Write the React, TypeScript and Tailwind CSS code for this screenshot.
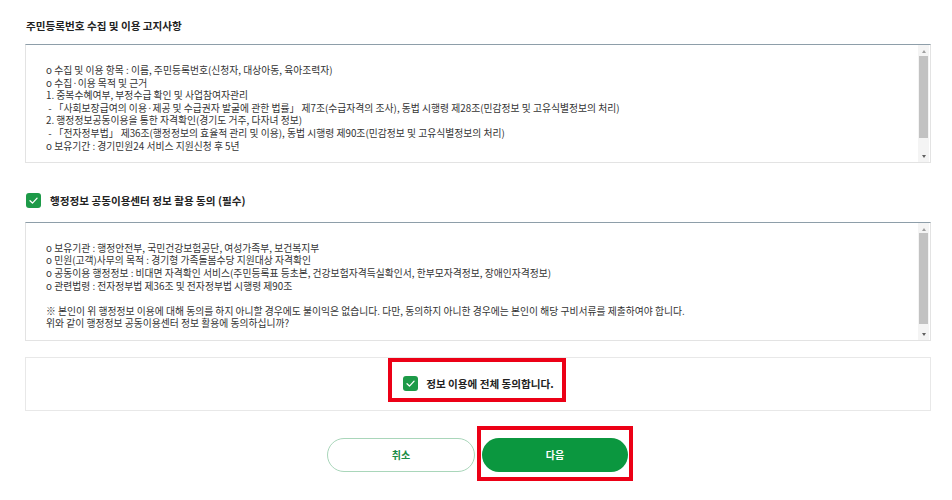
import React from "react";

const FONT = { fontFamily: '"Noto Sans CJK KR", "Noto Sans", sans-serif' };

function Check({ size = 15 }: { size?: number }) {
  return (
    <div
      className="flex items-center justify-center rounded-[3px] bg-[#1d9a48] shrink-0"
      style={{ width: size, height: size }}
    >
      <svg width={size - 4} height={size - 4} viewBox="0 0 12 12" fill="none">
        <path d="M2.2 6.2 L4.9 8.8 L9.9 3.4" stroke="#ffffff" strokeWidth="1.4" strokeLinecap="round" strokeLinejoin="round" />
      </svg>
    </div>
  );
}

function FakeScroll({ thumbTop, thumbH }: { thumbTop: number; thumbH: number }) {
  return (
    <div className="relative w-[11px] mr-[1px] bg-[#f4f4f4] shrink-0">
      <div className="flex justify-center pt-[5px]">
        <div className="w-0 h-0 border-l-[2.5px] border-r-[2.5px] border-b-[3px] border-l-transparent border-r-transparent border-b-[#a0a0a0]" />
      </div>
      <div className="absolute left-[1px] right-[1px] bg-[#c2c2c2]" style={{ top: thumbTop, height: thumbH }} />
      <div className="absolute bottom-[4px] left-0 right-0 flex justify-center">
        <div className="w-0 h-0 border-l-[2.5px] border-r-[2.5px] border-t-[3px] border-l-transparent border-r-transparent border-t-[#606060]" />
      </div>
    </div>
  );
}

const box1 = [
  "o 수집 및 이용 항목 : 이름, 주민등록번호(신청자, 대상아동, 육아조력자)",
  "o 수집·이용 목적 및 근거",
  "1. 중복수혜여부, 부정수급 확인 및 사업참여자관리",
  " - 「사회보장급여의 이용·제공 및 수급권자 발굴에 관한 법률」 제7조(수급자격의 조사), 동법 시행령 제28조(민감정보 및 고유식별정보의 처리)",
  "2. 행정정보공동이용을 통한 자격확인(경기도 거주, 다자녀 정보)",
  " - 「전자정부법」 제36조(행정정보의 효율적 관리 및 이용), 동법 시행령 제90조(민감정보 및 고유식별정보의 처리)",
  "o 보유기간 : 경기민원24 서비스 지원신청 후 5년",
];

const box2 = [
  "o 보유기관 : 행정안전부, 국민건강보험공단, 여성가족부, 보건복지부",
  "o 민원(고객)사무의 목적 : 경기형 가족돌봄수당 지원대상 자격확인",
  "o 공동이용 행정정보 : 비대면 자격확인 서비스(주민등록표 등초본, 건강보험자격득실확인서, 한부모자격정보, 장애인자격정보)",
  "o 관련법령 : 전자정부법 제36조 및 전자정부법 시행령 제90조",
  " ",
  "※ 본인이 위 행정정보 이용에 대해 동의를 하지 아니할 경우에도 불이익은 없습니다. 다만, 동의하지 아니한 경우에는 본인이 해당 구비서류를 제출하여야 합니다.",
  "위와 같이 행정정보 공동이용센터 정보 활용에 동의하십니까?",
];

function TextBox({ lines, thumbTop, thumbH }: { lines: string[]; thumbTop: number; thumbH: number }) {
  return (
    <div className="flex h-[119px] bg-white border border-[#e3e3e3] border-t-[#8e9ea9]">
      <div className="flex-1 pl-[20px] pt-[19px] text-[9.8px] leading-[12.6px] text-[#333]">
        {lines.map((l, i) => (
          <div key={i} className="whitespace-pre">{l}</div>
        ))}
      </div>
      <FakeScroll thumbTop={thumbTop} thumbH={thumbH} />
    </div>
  );
}

export default function App() {
  return (
    <div className="w-[952px] h-[500px] bg-white pl-[25px] pr-[21px] pt-[18px]" style={FONT}>
      <div className="text-[10.6px] leading-[15px] font-bold text-[#222] pl-[1px]">주민등록번호 수집 및 이용 고지사항</div>
      <div className="mt-[11px]">
        <TextBox lines={box1} thumbTop={11} thumbH={82} />
      </div>
      <div className="flex items-center gap-[9px] mt-[30px] pl-[1px]">
        <Check />
        <div className="text-[10.6px] font-bold text-[#222]">행정정보 공동이용센터 정보 활용 동의 (필수)</div>
      </div>
      <div className="mt-[13px]">
        <TextBox lines={box2} thumbTop={10} thumbH={91} />
      </div>
      <div className="mt-[16px] h-[54px] border border-[#e8e8e8] flex justify-center items-start">
        <div className="ml-[-2px] border-[4px] border-[#ec0016] pl-[11px] pr-[8px] pt-[14px] pb-[7px] flex items-center gap-[8px]">
          <Check />
          <div className="text-[10.6px] leading-[15px] font-bold text-[#222]">정보 이용에 전체 동의합니다.</div>
        </div>
      </div>
      <div className="mt-[15px] flex justify-center items-start gap-[2px] pl-[4px]">
        <button className="mt-[12px] w-[148px] h-[34px] rounded-full border border-[#a9d6ba] bg-white text-[10px] font-bold text-[#1b8c44]">
          취소
        </button>
        <div className="border-[4px] border-[#ec0016] pt-[8px] pb-[5px] px-[1px]">
          <button className="block w-[146px] h-[34px] rounded-full bg-[#0b973f] text-[10px] font-bold text-white">
            다음
          </button>
        </div>
      </div>
    </div>
  );
}
